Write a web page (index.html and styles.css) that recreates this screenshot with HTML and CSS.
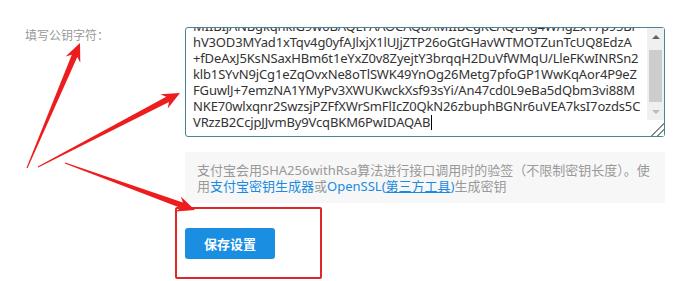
FILE: index.html
```html
<!DOCTYPE html>
<html lang="zh-CN">
<head>
    <meta charset="UTF-8">
    <meta name="viewport" content="width=device-width, initial-scale=1.0">
    <title>支付宝公钥设置</title>
    <link rel="stylesheet" href="styles.css">
</head>
<body>
    <div class="form-row">
        <label class="field-label" for="publicKey">填写公钥字符：</label>
        <div class="field">
            <div class="key-input" id="publicKey">
                <div class="key-text">
                    <div class="key-lines">MIIBIjANBgkqhkiG9w0BAQEFAAOCAQ8AMIIBCgKCAQEAg4W/lgZxT7p95Br
hV3OD3MYad1xTqv4g0yfAJlxjX1lUJjZTP26oGtGHavWTMOTZunTcUQ8EdzA
+fDeAxJ5KsNSaxHBm6t1eYxZ0v8ZyejtY3brqqH2DuVfWMqU/LleFKwINRSn2
klb1SYvN9jCg1eZqOvxNe8oTlSWK49YnOg26Metg7pfoGP1WwKqAor4P9eZ
FGuwlJ+7emzNA1YMyPv3XWUKwckXsf93sYi/An47cd0L9eBa5dQbm3vi88M
NKE70wlxqnr2SwzsjPZFfXWrSmFlIcZ0QkN26zbuphBGNr6uVEA7ksI7ozds5C
VRzzB2CcjpJJvmBy9VcqBKM6PwIDAQAB<span class="caret"></span></div>
                </div>
                <div class="scrollbar">
                    <div class="sb-arrow sb-up"></div>
                    <div class="sb-track"><div class="sb-thumb"></div></div>
                    <div class="sb-arrow sb-down"></div>
                    <div class="sb-grip"></div>
                </div>
            </div>

            <div class="help">
                支付宝会用SHA256withRsa算法进行接口调用时的验签（不限制密钥长度）。使用<a href="#">支付宝密钥生成器</a>或<a href="#">OpenSSL(<u>第三方工具</u>)</a>生成密钥
            </div>

            <button type="button" class="btn-save">保存设置</button>
        </div>
    </div>

    <!-- 标注 -->
    <div class="mark-box"></div>
    <svg class="arrows" width="688" height="281" viewBox="0 0 688 281">
        <polygon points="27.5,168.2 77.3,57.1 80.3,62.7 80,43 65.6,56.4 71.8,54.7 26.5,167.8"/>
        <polygon points="38.2,167.4 169,102.1 167.7,108.4 180,93 160.3,94.2 166.2,96.8 37.8,166.6"/>
        <polygon points="64.8,163.5 180.8,208.1 175.3,211.4 195,210 180.8,196.4 182.9,202.4 65.2,162.5"/>
    </svg>
</body>
</html>
```

FILE: styles.css
```css
body {
    margin: 0;
    background: #fff;
    font-family: "Noto Sans", "Noto Sans CJK SC", sans-serif;
}
.form-row {
    display: flex;
    padding-top: 27px;
}
.field-label {
    width: 160px;
    padding-left: 25px;
    padding-top: 1px;
    font-size: 12px;
    line-height: 16px;
    color: #999;
}
.field {
    width: 481px;
}
.key-input {
    display: flex;
    box-sizing: border-box;
    width: 480px;
    height: 110px;
    border: 1px solid #4a8393;
    border-radius: 3px;
    background: #fff;
}
.key-text {
    flex: 1;
    overflow: hidden;
    padding-left: 7px;
}
.key-lines {
    margin-top: -10px;
    white-space: pre;
    font-size: 13px;
    letter-spacing: -0.15px;
    line-height: 16px;
    color: #333;
}
.caret {
    display: inline-block;
    width: 1px;
    height: 15px;
    margin-left: 1px;
    vertical-align: -3px;
    background: #000;
}
.scrollbar {
    display: flex;
    flex-direction: column;
    width: 17px;
    background: #f0f0f0;
}
.sb-arrow {
    height: 17px;
    display: flex;
    align-items: center;
    justify-content: center;
}
.sb-arrow::before {
    content: "";
    border-left: 4px solid transparent;
    border-right: 4px solid transparent;
}
.sb-up::before {
    border-bottom: 4px solid #606060;
}
.sb-down::before {
    border-top: 4px solid #bcbcbc;
}
.sb-track {
    flex: 1;
    padding: 5px 2px 0;
}
.sb-thumb {
    height: 52px;
    background: #cdcdcd;
}
.sb-grip {
    height: 16px;
    background: #fff linear-gradient(135deg, transparent 60%, #888 60%, #888 66%, transparent 66%, transparent 78%, #888 78%, #888 84%, transparent 84%);
}
.help {
    box-sizing: border-box;
    width: 480px;
    margin-top: 15px;
    padding: 10px 12px 9px;
    background: #f7f7f7;
    border-radius: 2px;
    font-size: 13px;
    line-height: 16px;
    color: #999;
}
.help a {
    color: #1a8ae0;
    text-decoration: none;
}
.btn-save {
    display: block;
    width: 90px;
    height: 31px;
    margin-top: 25px;
    padding: 0;
    background: #1a8ee1;
    color: #fff;
    border: none;
    border-radius: 3px;
    font-family: inherit;
    font-size: 13px;
    font-weight: bold;
    cursor: pointer;
}
.mark-box {
    position: absolute;
    left: 175px;
    top: 207px;
    width: 143px;
    height: 68px;
    border: 2px solid #e02626;
    border-radius: 2px;
}
.arrows {
    position: absolute;
    left: 0;
    top: 0;
    pointer-events: none;
}
.arrows polygon {
    fill: #ee1d1d;
}
```
